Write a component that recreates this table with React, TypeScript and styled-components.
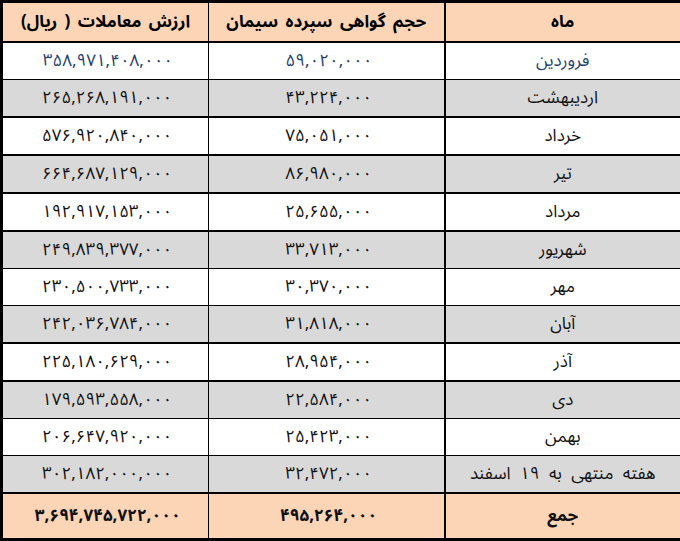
import React from "react";
import styled, { createGlobalStyle } from "styled-components";

const Global = createGlobalStyle`
  html, body { margin: 0; padding: 0; background: #ffffff; }
  body { font-family: "Noto Sans Arabic", "DejaVu Sans", sans-serif; }
`;

type Tone = "white" | "gray" | "peach";
const bg: Record<Tone, string> = { white: "#ffffff", gray: "#d9d9d9", peach: "#fbd5b5" };

const Table = styled.table`
  direction: rtl;
  width: 680px;
  height: 541px;
  border-collapse: collapse;
  table-layout: fixed;
  border: 3px solid #000;
`;

const Row = styled.tr<{ $tone: Tone; $h: number; $line: number }>`
  height: ${(p) => p.$h}px;
  background: ${(p) => bg[p.$tone]};
  border-bottom: ${(p) => p.$line}px solid #000;
`;

const Cell = styled.td<{ $bold?: boolean; $blue?: boolean; $line?: number }>`
  padding: 0;
  text-align: center;
  vertical-align: middle;
  border-left: ${(p) => p.$line ?? 0}px solid #000;
  color: ${(p) => (p.$blue ? "#1f3f6e" : "#111")};
  font-weight: ${(p) => (p.$bold ? 700 : 400)};
  font-size: 17px;
  word-spacing: 5px;
  white-space: nowrap;
`;

const HeadCell = styled.th<{ $line?: number }>`
  padding: 0;
  text-align: center;
  vertical-align: middle;
  border-left: ${(p) => p.$line ?? 0}px solid #000;
  color: #000;
  font-weight: 700;
  font-size: 17px;
  word-spacing: 3px;
  white-space: nowrap;
`;

const Num = styled.span<{ $sp: number }>`
  direction: ltr;
  unicode-bidi: isolate;
  display: inline-block;
  letter-spacing: ${(p) => p.$sp}px;
  margin-right: ${(p) => -p.$sp}px;
`;

const rows: [string, string, string][] = [
  ["فروردین", "۵۹,۰۲۰,۰۰۰", "۳۵۸,۹۷۱,۴۰۸,۰۰۰"],
  ["اردیبهشت", "۴۳,۲۲۴,۰۰۰", "۲۶۵,۲۶۸,۱۹۱,۰۰۰"],
  ["خرداد", "۷۵,۰۵۱,۰۰۰", "۵۷۶,۹۲۰,۸۴۰,۰۰۰"],
  ["تیر", "۸۶,۹۸۰,۰۰۰", "۶۶۴,۶۸۷,۱۲۹,۰۰۰"],
  ["مرداد", "۲۵,۶۵۵,۰۰۰", "۱۹۲,۹۱۷,۱۵۳,۰۰۰"],
  ["شهریور", "۳۳,۷۱۳,۰۰۰", "۲۴۹,۸۳۹,۳۷۷,۰۰۰"],
  ["مهر", "۳۰,۳۷۰,۰۰۰", "۲۳۰,۵۰۰,۷۳۳,۰۰۰"],
  ["آبان", "۳۱,۸۱۸,۰۰۰", "۲۴۲,۰۳۶,۷۸۴,۰۰۰"],
  ["آذر", "۲۸,۹۵۴,۰۰۰", "۲۲۵,۱۸۰,۶۲۹,۰۰۰"],
  ["دی", "۲۲,۵۸۴,۰۰۰", "۱۷۹,۵۹۳,۵۵۸,۰۰۰"],
  ["بهمن", "۲۵,۴۲۳,۰۰۰", "۲۰۶,۶۴۷,۹۲۰,۰۰۰"],
  ["هفته منتهی به ۱۹ اسفند", "۳۲,۴۷۲,۰۰۰", "۳۰۲,۱۸۲,۰۰۰,۰۰۰"],
];

const lines = [1, 2, 2, 2, 2, 1, 1, 2, 2, 1, 1, 2];

export default function App() {
  return (
    <>
      <Global />
      <Table>
        <colgroup>
          <col style={{ width: 237 }} />
          <col style={{ width: 236 }} />
          <col style={{ width: 207 }} />
        </colgroup>
        <thead>
          <Row $tone="peach" $h={40} $line={2}>
            <HeadCell $line={2}>ماه</HeadCell>
            <HeadCell $line={1}>حجم گواهی سپرده سیمان</HeadCell>
            <HeadCell>ارزش معاملات ( ریال)</HeadCell>
          </Row>
        </thead>
        <tbody>
          {rows.map(([m, v, t], i) => (
            <Row key={m} $tone={i % 2 === 0 ? "white" : "gray"} $h={37} $line={lines[i]}>
              <Cell $line={2} $blue={i === 0}>{m}</Cell>
              <Cell $line={1} $blue={i === 0}>
                <Num $sp={i === 0 ? 5.4 : 4.8}>{v}</Num>
              </Cell>
              <Cell $blue={i === 0}>
                <Num $sp={i === 0 ? 4.8 : 3.3}>{t}</Num>
              </Cell>
            </Row>
          ))}
          <Row $tone="peach" $h={46} $line={3}>
            <Cell $line={2} $bold>جمع</Cell>
            <Cell $line={1} $bold>
              <Num $sp={4.9}>۴۹۵,۲۶۴,۰۰۰</Num>
            </Cell>
            <Cell $bold>
              <Num $sp={4.5}>۳,۶۹۴,۷۴۵,۷۲۲,۰۰۰</Num>
            </Cell>
          </Row>
        </tbody>
      </Table>
    </>
  );
}
